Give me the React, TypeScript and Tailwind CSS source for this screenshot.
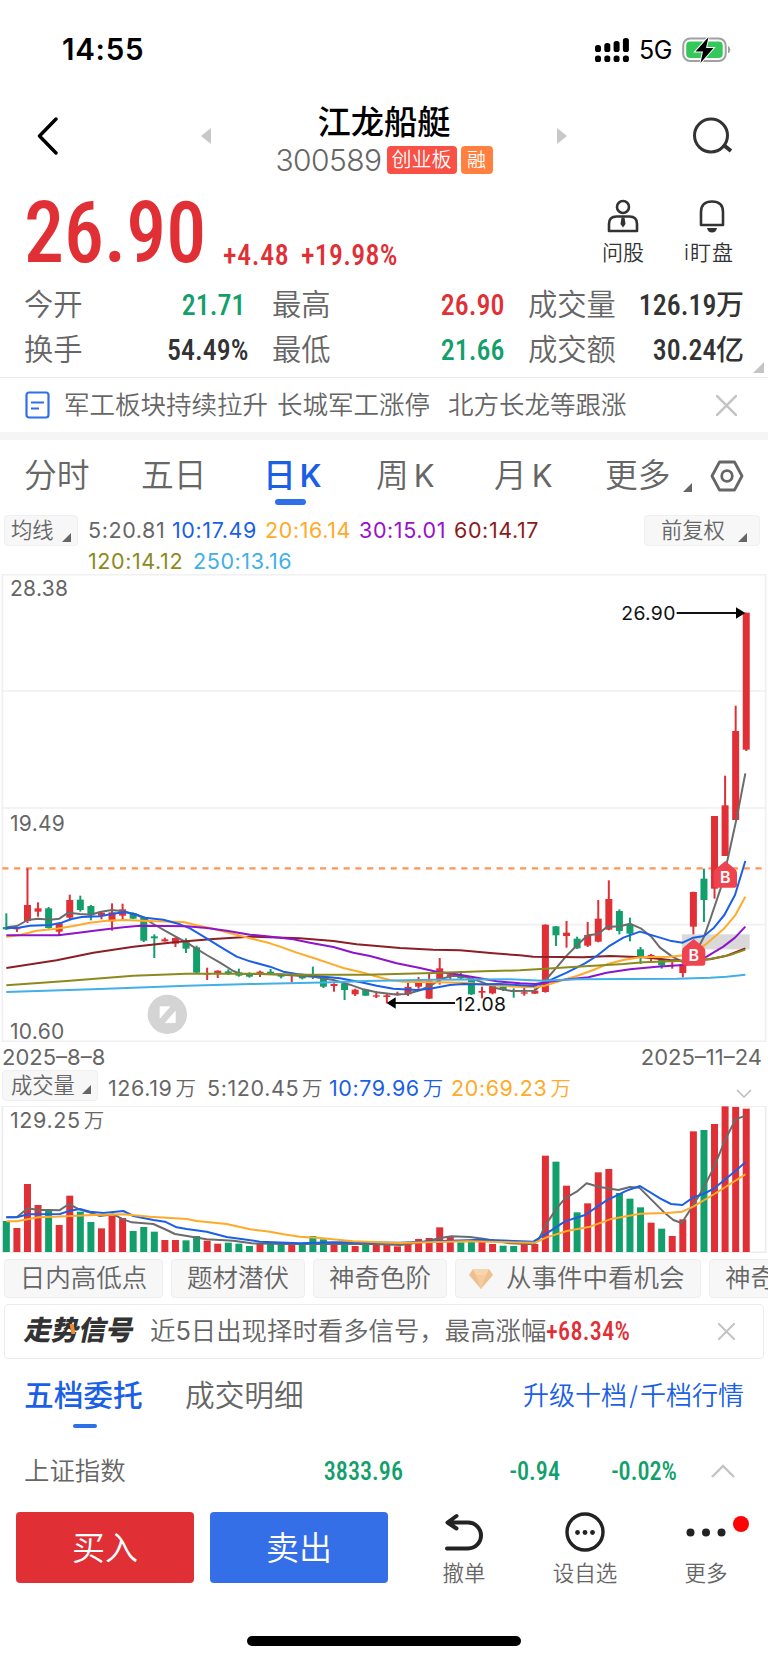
import type { ReactNode } from 'react';
import clsx from 'clsx';

type Candle = [up: number, high: number, top: number, bottom: number, low: number];

const STEP = 31.71;
const FIRST_X = 19;

// [up, high, body top, body bottom, low] in chart units
const candles: Candle[] = [
  [0, 220, 261, 268, 270], [1, 262, 265, 268, 276], [1, 85, 195, 243, 249], [1, 187, 205, 215, 230],
  [0, 201, 205, 264, 266], [1, 250, 250, 275, 285], [1, 164, 180, 233, 237], [0, 167, 179, 210, 215],
  [0, 195, 198, 226, 241], [1, 215, 218, 227, 238], [1, 190, 217, 244, 272], [1, 191, 208, 227, 240],
  [0, 217, 219, 236, 237], [0, 230, 232, 302, 306], [0, 283, 289, 295, 354], [1, 293, 298, 304, 305],
  [1, 292, 294, 311, 321], [0, 295, 303, 326, 339], [0, 317, 322, 398, 400], [1, 383, 399, 404, 420],
  [1, 391, 392, 400, 414], [0, 388, 394, 399, 405], [0, 386, 397, 407, 410], [0, 397, 401, 410, 413],
  [1, 392, 395, 402, 411], [0, 387, 395, 400, 402], [0, 400, 402, 410, 415], [1, 402, 405, 408, 427],
  [0, 402, 404, 415, 418], [0, 380, 404, 408, 417], [0, 410, 412, 440, 444], [1, 430, 432, 438, 455],
  [0, 428, 430, 450, 480], [1, 446, 449, 463, 468], [0, 447, 449, 467, 468], [1, 453, 466, 470, 474],
  [1, 462, 466, 471, 490], [1, 455, 463, 466, 467], [1, 428, 441, 463, 468], [1, 411, 422, 440, 446],
  [1, 401, 422, 476, 477], [1, 354, 385, 418, 434], [1, 399, 403, 408, 420], [0, 395, 405, 415, 420],
  [0, 417, 420, 463, 465], [1, 440, 453, 458, 475], [1, 432, 436, 460, 463], [0, 434, 440, 449, 453],
  [0, 445, 450, 456, 473], [1, 442, 457, 461, 467], [1, 445, 452, 461, 462], [1, 253, 254, 456, 458],
  [0, 258, 259, 286, 318], [1, 243, 278, 288, 323], [0, 290, 296, 325, 327], [1, 246, 285, 317, 321],
  [1, 180, 236, 305, 307], [1, 121, 177, 269, 271], [0, 208, 213, 273, 283], [0, 233, 252, 281, 304],
  [0, 321, 328, 352, 372], [1, 342, 345, 355, 367], [0, 355, 358, 376, 386], [1, 365, 375, 378, 386],
  [1, 370, 373, 399, 412], [1, 155, 156, 260, 283], [0, 86, 116, 180, 246], [1, -72, -72, 146, 176],
  [1, -193, -104, 48, 48], [1, -403, -327, -60, -60], [1, -682, -682, -271, -267],
];

const maLines: { color: string; points: string }[] = [
  {
    color: '#6b6b6b',
    points:
      '19,262 51,258 83,240 115,236 150,239 178,236 205,218 240,222 272,224 300,216 335,210 370,214 410,225 435,236 460,252 500,275 560,308 620,345 660,368 700,393 720,401 780,402 850,404 940,410 1000,420 1050,434 1090,448 1130,457 1180,463 1220,462 1260,451 1300,432 1325,416 1355,408 1385,408 1415,416 1450,428 1490,445 1535,453 1605,452 1637,420 1670,382 1700,347 1732,315 1763,286 1795,282 1820,261 1860,259 1890,251 1922,265 1954,290 1980,323 2017,350 2048,366 2080,352 2112,290 2130,240 2162,145 2183,58 2210,-65 2236,-200',
  },
  {
    color: '#8b1f24',
    points:
      '19,384 170,361 280,338 400,320 530,306 640,297 750,290 900,295 1000,303 1070,313 1200,324 1300,329 1380,331 1480,340 1560,346 1600,350 1750,352 1830,348 1930,352 2010,360 2060,363 2130,358 2180,347 2236,325',
  },
  {
    color: '#ffaa28',
    points:
      '19,290 60,285 110,272 170,266 220,258 270,248 320,242 375,240 440,243 550,246 590,256 640,266 700,282 750,295 810,310 840,320 890,338 950,357 1000,374 1030,384 1090,398 1120,407 1170,420 1210,425 1300,427 1400,428 1450,434 1550,440 1605,442 1635,437 1680,423 1730,408 1780,390 1820,373 1870,360 1920,352 2010,350 2060,345 2115,315 2170,268 2205,227 2236,170',
  },
  {
    color: '#1a5fe6',
    points:
      '19,264 51,264 90,257 150,255 185,248 215,237 245,231 300,229 335,222 375,216 410,224 435,233 490,239 540,253 570,265 620,295 660,320 710,350 750,364 810,380 850,395 890,402 940,407 1020,415 1090,428 1130,437 1180,446 1250,450 1290,446 1350,435 1390,432 1440,433 1500,432 1600,438 1625,430 1655,418 1700,398 1755,370 1790,348 1825,320 1870,293 1920,275 1960,287 2010,302 2048,308 2080,293 2112,288 2142,263 2173,225 2205,165 2236,63',
  },
  {
    color: '#8e14cc',
    points:
      '19,286 175,286 230,279 300,270 370,262 420,257 500,258 560,259 620,264 680,272 750,284 800,289 880,298 930,308 1000,321 1060,338 1110,348 1190,370 1260,384 1310,395 1370,403 1440,415 1490,424 1560,430 1605,432 1640,427 1685,420 1765,412 1820,398 1890,388 1970,380 2060,374 2120,350 2170,320 2205,293 2236,260',
  },
  {
    color: '#8c8a1c',
    points:
      '19,436 200,423 400,407 560,401 780,401 900,404 1100,404 1300,399 1450,394 1560,391 1610,388 1730,380 1870,372 1930,367 2050,362 2130,357 2190,345 2236,329',
  },
  {
    color: '#41b0e8',
    points:
      '19,456 300,447 560,437 750,432 1000,427 1100,423 1300,419 1530,418 1630,422 1730,418 2030,416 2130,413 2180,410 2236,404',
  },
];

// top of each bar, bars stand on y = 438
const volumeTops = [
  345, 366, 234, 297, 314, 357, 269, 317, 348, 367, 329, 336, 375, 363, 377, 402, 402, 403, 390, 404, 413, 410, 413,
  420, 414, 414, 414, 414, 416, 390, 400, 409, 409, 420, 416, 416, 416, 421, 409, 399, 396, 364, 393, 409, 408, 408,
  414, 419, 420, 414, 414, 149, 167, 239, 319, 292, 199, 189, 261, 278, 304, 350, 368, 390, 340, 76, 72, 54, 1, 3, 8,
];
const volumeDown = [0, 4, 7, 8, 12, 13, 14, 17, 18, 21, 22, 23, 25, 26, 28, 29, 30, 32, 34, 43, 44, 47, 48, 52, 54, 58, 59, 60, 62, 66];

const volumeLines = [
  {
    color: '#6b6b6b',
    points:
      '19,532 51,531 83,505 115,510 148,510 178,511 207,492 237,508 270,518 300,528 340,523 370,538 395,547 460,552 500,570 525,582 620,598 700,602 755,610 860,612 1100,611 1200,615 1270,606 1320,594 1355,589 1410,591 1450,596 1490,604 1530,610 1600,613 1615,600 1640,550 1670,505 1695,475 1730,455 1760,430 1795,440 1855,450 1890,441 1918,443 1960,485 1990,515 2020,540 2045,549 2080,495 2110,445 2143,380 2175,300 2207,238 2236,227',
  },
  {
    color: '#1a5fe6',
    points:
      '19,532 51,532 83,523 180,522 210,512 240,507 270,515 310,519 370,513 400,528 460,540 495,545 530,562 560,567 620,575 680,591 780,605 900,610 1000,607 1200,608 1300,604 1450,599 1600,605 1640,580 1695,544 1755,525 1820,481 1880,452 1920,438 1980,475 2013,492 2047,495 2080,472 2110,462 2143,445 2207,392 2236,367',
  },
  {
    color: '#ffaa28',
    points:
      '19,544 51,544 115,532 200,529 280,525 370,523 450,530 560,537 590,543 680,552 750,568 810,575 850,583 900,590 960,594 1060,604 1200,609 1400,604 1605,608 1640,592 1700,573 1770,560 1830,538 1920,521 2000,519 2047,515 2080,500 2143,462 2236,403',
  },
];

const RED = '#e03036';
const GREEN = '#139f6c';

function Num({ children, className }: { children: ReactNode; className?: string }) {
  return (
    <span className={clsx("inline-block whitespace-nowrap font-['Roboto'] font-medium [font-stretch:75%] scale-x-[0.93]", className)}>
      {children}
    </span>
  );
}

function Corner({ className }: { className?: string }) {
  return (
    <svg viewBox="0 0 10 10" className={clsx('h-[9px] w-[9px] shrink-0', className)}>
      <path d="M10 0V10H0Z" fill="currentColor" />
    </svg>
  );
}

function Cross({ className }: { className?: string }) {
  return (
    <svg viewBox="0 0 20 20" className={clsx('shrink-0 text-[#c4c4c4]', className)}>
      <path d="M0 0L20 20M20 0L0 20" stroke="currentColor" strokeWidth="2.4" />
    </svg>
  );
}

function StatusBar() {
  return (
    <div className="flex h-[98px] items-center pl-[62px] pt-px">
      <span className="w-[532px] text-[29.500px] font-semibold tracking-[0.7px]">14:55</span>
      <svg viewBox="0 0 36 26" className="h-[26px] w-[36px]">
        {[7, 5, 3, 0].map((y, i) => (
          <g key={i}>
            <rect x={1 + i * 9.3} y={y + 1} width="6" height={14 - y} rx="2.6" />
            <rect x={1 + i * 9.3} y="18.5" width="6" height="6.5" rx="2.6" />
          </g>
        ))}
      </svg>
      <span className="ml-[9px] w-[33px] pt-[2px] text-[25px] font-normal tracking-[-0.5px]">5G</span>
      <svg viewBox="0 0 50 26" className="ml-[10px] h-[26px] w-[50px]">
        <rect x="1.2" y="1.500" width="42.5" height="22.500" rx="7" fill="none" stroke="#a0a0a0" strokeWidth="2" />
        <rect x="4.2" y="4.500" width="36.5" height="16.5" rx="4" fill="#34c759" />
        <path d="M46.500 9.500q3 3.2 0 6.500Z" fill="#a0a0a0" stroke="#a0a0a0" />
        <path d="M26.500 0L13.500 14.500H21L18.500 26L31.500 11H24Z" stroke="#fff" strokeWidth="2" paintOrder="stroke" />
      </svg>
    </div>
  );
}

function Header() {
  return (
    <div className="flex h-[82px] items-start pl-[37px]">
      <svg viewBox="0 0 22 38" className="mt-[19px] h-[38px] w-[22px]">
        <path d="M19 2L2.500 19L19 36" fill="none" stroke="#000" strokeWidth="3.400" strokeLinecap="round" strokeLinejoin="round" />
      </svg>
      <svg viewBox="0 0 10 16" className="ml-[142px] mt-[30px] h-[16px] w-[10px]">
        <path d="M10 0V16L0 8Z" fill="#c8c8c8" />
      </svg>
      <div className="flex w-[346px] flex-col items-center">
        <h1 className="mt-[7px] text-[33.300px] font-medium leading-[35px]">江龙船艇</h1>
        <div className="mt-[5px] flex items-center gap-[4px] leading-none text-white">
          <span className="w-[107px] text-[30px] font-light leading-[30px] tracking-[-0.6px] text-[#666]">300589</span>
          <span className="flex h-[28px] w-[70px] items-center justify-center rounded-[4px] bg-[#fa5046] text-[20px]">
            创业板
          </span>
          <span className="flex h-[28px] w-[32px] items-center justify-center rounded-[4px] bg-[#ff8040] text-[19px]">
            融
          </span>
        </div>
      </div>
      <svg viewBox="0 0 10 16" className="mt-[30px] h-[16px] w-[10px]">
        <path d="M0 0V16L10 8Z" fill="#c8c8c8" />
      </svg>
      <svg viewBox="0 0 42 40" className="ml-[125px] mt-[18px] h-[40px] w-[42px]">
        <circle cx="19" cy="19.500" r="16.500" fill="none" stroke="#333" strokeWidth="3" />
        <path d="M31 28.500L39 35" stroke="#333" strokeWidth="4" />
      </svg>
    </div>
  );
}

function PriceRow() {
  return (
    <div className="flex h-[100px] items-end pl-[24px] text-[#e03036]">
      <Num className="mb-[4px] w-[199px] origin-bottom-left text-[86px] leading-[86px]">26.90</Num>
      <Num className="mb-[10px] w-[78px] origin-left text-[30px] leading-[31px] tracking-[0.7px]">+4.48</Num>
      <Num className="mb-[10px] w-[289px] origin-left text-[30px] leading-[31px] tracking-[0.3px]">+19.98%</Num>
      <div className="mb-[15px] flex w-[66px] flex-col items-center text-[21px] leading-[24px] text-[#333]">
        <svg viewBox="0 0 32 34" className="mb-[8px] h-[34px] w-[32px]" fill="none" stroke="#333" strokeWidth="2.600">
          <circle cx="16" cy="8" r="6" />
          <path d="M2 32V25Q2 17.500 9.500 17.500H22.500Q30 17.500 30 25V32Z" strokeLinejoin="round" />
          <path d="M14.500 18.500H17.500L18.500 25L16 28.500L13.500 25Z" fill="#333" stroke="none" />
        </svg>
        问股
      </div>
      <div className="mb-[15px] ml-[16px] flex w-[74px] flex-col items-center text-[21px] leading-[24px] tracking-[1px] text-[#333]">
        <svg viewBox="0 0 28 34" className="mb-[8px] ml-[5px] h-[34px] w-[28px]" fill="none" stroke="#333" strokeWidth="2.600">
          <path d="M3 26V13Q3 2.500 14 2.500T25 13V26Z" strokeLinejoin="round" />
          <path d="M9 29H19Q18 33.500 14 33.500T9 29Z" fill="#333" stroke="none" />
        </svg>
        <span className="whitespace-nowrap">i盯盘</span>
      </div>
    </div>
  );
}

function Stat({ label, value, unit, className, valueClass }: { label: string; value: string; unit?: string; className: string; valueClass: string }) {
  return (
    <div className={clsx('flex h-[45px] items-center justify-between', className)}>
      <span className="text-[29.300px] text-[#666]">{label}</span>
      <span className={clsx('flex items-center', valueClass)}>
        <Num className="origin-right text-[30px]">{value}</Num>
        {unit && <span className="text-[28px] font-medium">{unit}</span>}
      </span>
    </div>
  );
}

function Stats() {
  return (
    <div className="relative flex h-[98px] flex-col border-b border-[#ececec] pl-[24px] pt-[2px]">
      <div className="flex">
        <Stat label="今开" value="21.71" className="w-[221px]" valueClass="text-[#139f6c]" />
        <Stat label="最高" value="26.90" className="ml-[27px] w-[232px]" valueClass="text-[#e03036]" />
        <Stat label="成交量" value="126.19" unit="万" className="ml-[24px] w-[216px]" valueClass="text-[#333]" />
      </div>
      <div className="flex">
        <Stat label="换手" value="54.49%" className="w-[224px]" valueClass="text-[#333]" />
        <Stat label="最低" value="21.66" className="ml-[24px] w-[232px]" valueClass="text-[#139f6c]" />
        <Stat label="成交额" value="30.24" unit="亿" className="ml-[24px] w-[216px]" valueClass="text-[#333]" />
      </div>
      <Corner className="absolute bottom-[4px] right-[4px] h-[11px] w-[11px] text-[#c4c4c4]" />
    </div>
  );
}

function News() {
  return (
    <div className="flex h-[62px] items-center border-b-8 border-[#f5f5f5] pl-[25px] text-[25.5px] text-[#666]">
      <svg viewBox="0 0 25 28" className="h-[28px] w-[25px]" fill="none" stroke="#2f6fe8" strokeWidth="2.200">
        <rect x="1.500" y="1.500" width="22" height="25" rx="2.500" />
        <path d="M6 11.500H19M6 17.500H14" />
      </svg>
      <div className="ml-[14px] flex w-[652px] whitespace-nowrap">
        <span>军工板块持续拉升</span>
        <span className="ml-[9px]">长城军工涨停</span>
        <span className="ml-[18px]">北方长龙等跟涨</span>
      </div>
      <Cross className="h-[21px] w-[21px]" />
    </div>
  );
}

function PeriodTabs() {
  return (
    <div className="flex h-[70px] items-center pl-[24px] pt-px text-[32.800px] text-[#666]">
      <span className="w-[117px]">分时</span>
      <span className="w-[122px]">五日</span>
      <div className="relative w-[113px] font-medium text-[#1a5fe6]">
        日<span className="ml-[4px] text-[31px] font-semibold">K</span>
        <span className="absolute -bottom-[5px] left-[12px] h-[6px] w-[31px] rounded-full bg-[#2f6fe8]" />
      </div>
      <span className="w-[118px]">周<span className="ml-[5px] text-[31px] font-normal">K</span></span>
      <span className="w-[111px]">月<span className="ml-[5px] text-[31px] font-normal">K</span></span>
      <span className="w-[67px]">更多</span>
      <Corner className="ml-[11px] mt-[24px]" />
      <svg viewBox="0 0 34 32" className="ml-[18px] h-[32px] w-[34px]" fill="none" stroke="#666" strokeWidth="2.800">
        <path d="M9.500 2H24.500L32 16L24.500 30H9.500L2 16Z" strokeLinejoin="round" />
        <circle cx="17" cy="16" r="5.300" />
      </svg>
    </div>
  );
}

function Averages() {
  return (
    <div className="flex h-[64px] items-start pl-[4px] pt-[5px] text-[21.300px] text-[#666]">
      <div className="flex h-[31px] w-[74px] items-center rounded-[4px] border border-[#f0f0f0] bg-[#f7f7f7] pl-[6px]">
        均线<Corner className="ml-[8px] mt-[14px]" />
      </div>
      <div className="ml-[10px] w-[556px] text-[21.5px] font-normal leading-[31px] tracking-[0.6px]">
        <div className="flex">
          <span className="w-[84px]">5:20.81</span>
          <span className="w-[93px] text-[#1a5fe6]">10:17.49</span>
          <span className="w-[94px] text-[#ffaa28]">20:16.14</span>
          <span className="w-[95px] text-[#9a10cc]">30:15.01</span>
          <span className="text-[#8b1a1a]">60:14.17</span>
        </div>
        <div className="flex">
          <span className="w-[105px] text-[#8c8a1c]">120:14.12</span>
          <span className="text-[#41b0e8]">250:13.16</span>
        </div>
      </div>
      <div className="flex h-[31px] w-[116px] items-center rounded-[4px] border border-[#f0f0f0] bg-[#f7f7f7] pl-[16px]">
        前复权<Corner className="ml-[13px] mt-[14px]" />
      </div>
    </div>
  );
}

function BuyMarker({ x, y }: { x: number; y: number }) {
  return (
    <g transform={`translate(${x} ${y})`}>
      <path d="M35 0L64 24Q70 29 70 36V72Q70 80 62 80H8Q0 80 0 72V36Q0 29 6 24Z" fill="#ee4450" />
      <text x="35" y="67" textAnchor="middle" fill="#fff" fontSize="48" fontWeight="600" fontFamily="Inter">B</text>
    </g>
  );
}

function KLineChart() {
  return (
    <div className="relative h-[468px] font-normal">
      <svg viewBox="0 0 2304 1404" className="h-[468px] w-[768px]">
        <g fill="none" stroke="#f0f0f2" strokeWidth="5">
          <rect x="7" y="2" width="2290" height="1400" />
          <path d="M7 351H2297M7 702H2297M7 1052H2297" />
        </g>
        <g transform="translate(0 798)">
          <path d="M7 85H2297" stroke="#ff9455" strokeWidth="6.500" strokeDasharray="18.500 16.800" />
          <rect x="2046" y="283" width="203" height="45" fill="#d9d9d9" />
          {candles.map(([up, high, top, bottom, low], i) => {
            const x = FIRST_X + i * STEP;
            const color = up ? RED : GREEN;
            return (
              <g key={i} fill={color}>
                <rect x={x - 3} y={high} width="6" height={low - high} />
                <rect x={x - 10.5} y={top} width="21" height={bottom - top} />
              </g>
            );
          })}
          {maLines.map((line) => (
            <polyline key={line.color} points={line.points} fill="none" stroke={line.color} strokeWidth="6" strokeLinejoin="round" />
          ))}
          <BuyMarker x={2046} y={297} />
          <BuyMarker x={2141} y={63} />
          <path d="M1185 489H1365" stroke="#111" strokeWidth="6" />
          <path d="M1160 489L1187 472V506Z" />
          <path d="M2030 -681H2215" stroke="#111" strokeWidth="6" />
          <path d="M2236 -681L2208 -698V-664Z" />
          <g fill="#111" fontSize="58" fontFamily="Inter">
            <text x="1366" y="512" textLength="152">12.08</text>
            <text x="1864" y="-659" textLength="162">26.90</text>
          </g>
          <circle cx="502" cy="523" r="59" fill="#d4d4d4" />
          <path d="M480 500H510L480 534ZM526 514V548H496Z" fill="#fff" stroke="#fff" strokeWidth="2" />
        </g>
      </svg>
      <span className="absolute left-[10px] top-[2px] text-[21px] leading-[25px] tracking-[0.3px] text-[#666]">28.38</span>
      <span className="absolute left-[10px] top-[237px] text-[21px] leading-[25px] tracking-[0.3px] text-[#666]">19.49</span>
      <span className="absolute left-[10px] top-[445px] text-[21px] leading-[25px] tracking-[0.3px] text-[#666]">10.60</span>
    </div>
  );
}

function Wan() {
  return <span className="ml-[3px] text-[20.500px] font-[350]">万</span>;
}

function VolumeChart() {
  return (
    <div>
      <div className="flex h-[27px] items-center justify-between pl-[2px] pr-[6px] pt-[3px] text-[22px] font-normal leading-none text-[#666]">
        <span>2025–8–8</span>
        <span>2025–11–24</span>
      </div>
      <div className="flex h-[37px] items-center pl-[2px] text-[21.3px] leading-none text-[#666]">
        <div className="mb-[4px] flex h-[31px] w-[96px] items-center rounded-[4px] border border-[#f0f0f0] bg-[#f7f7f7] pl-[8px]">
          成交量<Corner className="ml-[7px] mt-[8px]" />
        </div>
        <div className="ml-[10px] mt-[3px] flex whitespace-nowrap text-[21.500px] font-normal tracking-[0.6px]">
          <span className="w-[99px]">126.19<Wan /></span>
          <span className="w-[122px]">5:120.45<Wan /></span>
          <span className="w-[122px] text-[#1a5fe6]">10:79.96<Wan /></span>
          <span className="text-[#ffaa28]">20:69.23<Wan /></span>
        </div>
        <svg viewBox="0 0 16 9" className="ml-auto mr-[16px] mt-[12px] h-[9px] w-[16px]">
          <path d="M1 1L8 8L15 1" fill="none" stroke="#bbb" strokeWidth="1.500" />
        </svg>
      </div>
      <div className="relative h-[147px]">
        <svg viewBox="0 0 2304 441" className="h-[147px] w-[768px]">
          <rect x="7" y="0" width="2290" height="439" fill="none" stroke="#ececee" strokeWidth="5" />
          {volumeTops.map((top, i) => (
            <rect key={i} x={FIRST_X + i * STEP - 10.5} y={top} width="21" height={438 - top} fill={volumeDown.includes(i) ? GREEN : RED} />
          ))}
          <g transform="translate(0 -198)">
            {volumeLines.map((line) => (
              <polyline key={line.color} points={line.points} fill="none" stroke={line.color} strokeWidth="6" strokeLinejoin="round" />
            ))}
          </g>
        </svg>
        <span className="absolute left-[10px] top-[2px] whitespace-nowrap text-[21.5px] font-normal leading-[25px] tracking-[0.6px] text-[#666]">
          129.25<Wan />
        </span>
      </div>
    </div>
  );
}

function Chip({ children, className }: { children: ReactNode; className: string }) {
  return (
    <div className={clsx('flex h-[39px] shrink-0 items-center whitespace-nowrap rounded-[4px] border border-[#eee] bg-[#f7f7f7]', className)}>
      {children}
    </div>
  );
}

function Chips() {
  return (
    <div className="flex h-[51px] gap-[8px] overflow-hidden pl-[4px] pt-[6px] text-[25.5px] text-[#666]">
      <Chip className="w-[159px] justify-center">日内高低点</Chip>
      <Chip className="w-[134px] justify-center">题材潜伏</Chip>
      <Chip className="w-[134px] justify-center">神奇色阶</Chip>
      <Chip className="w-[246px] pl-[13px]">
        <svg viewBox="0 0 24 20" className="mr-[13px] h-[20px] w-[24px]">
          <path d="M4 0H20L24 6L12 20L0 6Z" fill="#efc08e" />
          <path d="M4 0H20L17 6H7Z" fill="#f8d5ae" />
          <path d="M7 6H17L12 20Z" fill="#f5cc9f" />
        </svg>
        从事件中看机会
      </Chip>
      <Chip className="w-[140px] pl-[15px]">神奇</Chip>
    </div>
  );
}

function SignalBanner() {
  return (
    <div className="mx-[4px] flex h-[55px] items-center rounded-[4px] border border-[#ececec] pl-[20px] text-[25.4px] text-[#666]">
      <span className="relative mr-[16px] inline-block w-[109px] -skew-x-12 whitespace-nowrap text-[27.300px] font-black text-[#333]">
        走势信号
        <svg viewBox="0 0 8 10" className="absolute left-[43px] top-[13px] h-[10px] w-[8px]">
          <path d="M0 0H4L8 10H4Z" fill="#f48a2a" />
        </svg>
      </span>
      <span className="whitespace-nowrap">近<span className="font-normal">5</span>日出现择时看多信号，最高涨幅</span>
      <Num className="origin-left text-[26px] tracking-[0.3px] text-[#e03036]">+68.34%</Num>
      <Cross className="ml-auto mr-[28px] h-[17px] w-[17px]" />
    </div>
  );
}

function OrderBook() {
  return (
    <>
      <div className="flex h-[76px] items-center pb-[3px] pl-[24px] text-[29.700px] text-[#666]">
        <div className="relative w-[161px] font-medium text-[#1a5fe6]">
          五档委托
          <span className="absolute -bottom-[10px] left-[49px] h-[4px] w-[24px] rounded-full bg-[#2f6fe8]" />
        </div>
        <span>成交明细</span>
        <span className="ml-auto mr-[24px] flex text-[26px] text-[#1a5fe6]">
          升级十档<span className="mx-[2px]">/</span>千档行情
        </span>
      </div>
      <div className="flex h-[72px] items-center pl-[24px] text-[25.4px] text-[#666]">
        <span className="w-[180px]">上证指数</span>
        <Num className="w-[199px] origin-right text-right text-[26px]">
          <span className="text-[#139f6c]">3833.96</span>
        </Num>
        <Num className="w-[157px] origin-right text-right text-[26px] text-[#139f6c]">-0.94</Num>
        <Num className="w-[117px] origin-right text-right text-[26px] text-[#139f6c]">-0.02%</Num>
        <svg viewBox="0 0 24 14" className="ml-[34px] h-[14px] w-[24px]">
          <path d="M1 13L12 2L23 13" fill="none" stroke="#c4c4c4" strokeWidth="2.400" />
        </svg>
      </div>
    </>
  );
}

function BottomBar() {
  return (
    <div className="flex h-[156px] flex-col items-center pb-[17px] pt-[5px]">
      <div className="flex w-full pl-[16px] text-[21.500px] leading-[24px] text-[#666]">
        <button className="h-[71px] w-[178px] rounded-[4px] bg-[#e03036] text-[33px] text-white">买入</button>
        <button className="ml-[16px] h-[71px] w-[178px] rounded-[4px] bg-[#346fe8] text-[33px] text-white">卖出</button>
        <div className="ml-[36px] flex w-[80px] flex-col items-center">
          <svg viewBox="0 0 40 40" className="mb-[9px] h-[40px] w-[40px]" fill="none" stroke="#222" strokeWidth="4">
            <path d="M12.500 4L3.500 10.500L12.500 16.500M4 10.500H24A13 13 0 0 1 24 36.500H3" strokeLinecap="round" strokeLinejoin="round" />
          </svg>
          撤单
        </div>
        <div className="ml-[31px] flex w-[100px] flex-col items-center">
          <svg viewBox="0 0 40 40" className="mb-[9px] h-[40px] w-[40px]">
            <circle cx="20" cy="20" r="18" fill="none" stroke="#222" strokeWidth="3.400" />
            <g fill="#222">
              <circle cx="12.500" cy="20.500" r="2.400" />
              <circle cx="20" cy="20.500" r="2.400" />
              <circle cx="27.500" cy="20.500" r="2.400" />
            </g>
          </svg>
          设自选
        </div>
        <div className="relative ml-[31px] flex w-[80px] flex-col items-center">
          <svg viewBox="0 0 40 40" className="mb-[9px] h-[40px] w-[40px]" fill="#222">
            <circle cx="4.500" cy="20.500" r="4" />
            <circle cx="20" cy="20.500" r="4" />
            <circle cx="35.500" cy="20.500" r="4" />
          </svg>
          更多
          <span className="absolute left-[67px] top-[4px] h-[16px] w-[16px] rounded-full bg-[#fb0506]" />
        </div>
      </div>
      <div className="mt-auto h-[10px] w-[274px] rounded-full bg-black" />
    </div>
  );
}

export default function App() {
  return (
    <div className="h-[1663px] w-[768px] overflow-hidden bg-white font-['Inter','Noto_Sans_CJK_SC',sans-serif] font-[350] text-black">
      <StatusBar />
      <Header />
      <PriceRow />
      <Stats />
      <News />
      <PeriodTabs />
      <Averages />
      <KLineChart />
      <VolumeChart />
      <Chips />
      <SignalBanner />
      <OrderBook />
      <BottomBar />
    </div>
  );
}
